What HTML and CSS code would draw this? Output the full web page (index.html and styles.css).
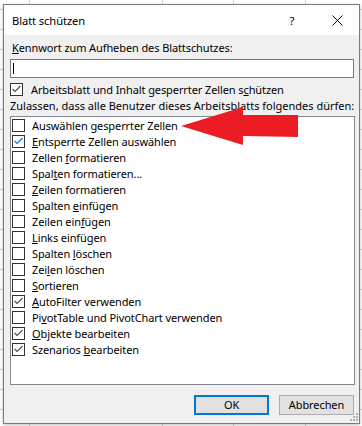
FILE: index.html
```html
<!DOCTYPE html>
<html lang="de">
<head>
<meta charset="utf-8">
<title>Blatt schützen</title>
<link rel="stylesheet" href="styles.css">
</head>
<body>
<div class="desk">
  <div class="dialog">
    <div class="titlebar">
      <span class="title">Blatt schützen</span>
      <span class="help">?</span>
      <span class="close"><svg width="11" height="11" viewBox="0 0 11 11"><path d="M0.5 0.5 L10.5 10.5 M10.5 0.5 L0.5 10.5" stroke="#000" stroke-width="1" fill="none"/></svg></span>
    </div>
    <div class="body">
      <div class="label"><u>K</u>ennwort zum Aufheben des Blattschutzes:</div>
      <div class="input"><span class="caret"></span></div>
      <div class="row main">
        <span class="cb"><svg class="tick" viewBox="0 0 11 11"><polyline points="1.5,5 4,7.5 9.5,2"/></svg></span>
        <span class="txt">Arbeitsblatt und Inhalt gesperrter Zellen s<u>c</u>hützen</span>
      </div>
      <div class="label2">Zulassen, dass alle Benutzer dieses Arbeitsblatts folgendes dürfen:</div>
      <div class="list">
        <div class="row"><span class="cb"></span><span class="txt">Auswählen <u>g</u>esperrter Zellen</span></div>
        <div class="row"><span class="cb"><svg class="tick blue" viewBox="0 0 11 11"><polyline points="1.5,5 4,7.5 9.5,2"/></svg></span><span class="txt"><u>E</u>ntsperrte Zellen auswählen</span></div>
        <div class="row"><span class="cb"></span><span class="txt">Zellen <u>f</u>ormatieren</span></div>
        <div class="row"><span class="cb"></span><span class="txt">Spal<u>t</u>en formatieren...</span></div>
        <div class="row"><span class="cb"></span><span class="txt"><u>Z</u>eilen formatieren</span></div>
        <div class="row"><span class="cb"></span><span class="txt">Spalten <u>e</u>infügen</span></div>
        <div class="row"><span class="cb"></span><span class="txt">Zeilen ein<u>f</u>ügen</span></div>
        <div class="row"><span class="cb"></span><span class="txt"><u>L</u>inks einfügen</span></div>
        <div class="row"><span class="cb"></span><span class="txt">Spalten <u>l</u>öschen</span></div>
        <div class="row"><span class="cb"></span><span class="txt">Zei<u>l</u>en löschen</span></div>
        <div class="row"><span class="cb"></span><span class="txt"><u>S</u>ortieren</span></div>
        <div class="row"><span class="cb"><svg class="tick" viewBox="0 0 11 11"><polyline points="1.5,5 4,7.5 9.5,2"/></svg></span><span class="txt"><u>A</u>utoFilter verwenden</span></div>
        <div class="row"><span class="cb"></span><span class="txt">Pi<u>v</u>otTable und PivotChart verwenden</span></div>
        <div class="row"><span class="cb"><svg class="tick" viewBox="0 0 11 11"><polyline points="1.5,5 4,7.5 9.5,2"/></svg></span><span class="txt"><u>O</u>bjekte bearbeiten</span></div>
        <div class="row"><span class="cb"><svg class="tick" viewBox="0 0 11 11"><polyline points="1.5,5 4,7.5 9.5,2"/></svg></span><span class="txt">Szenarios <u>b</u>earbeiten</span></div>
      </div>
      <div class="buttons">
        <button class="btn ok">OK</button>
        <button class="btn">Abbrechen</button>
      </div>
    </div>
    <svg class="grip" width="10" height="10" viewBox="0 0 10 10">
      <rect x="8" y="2" width="2" height="2" fill="#b0b0b0"/>
      <rect x="5" y="5" width="2" height="2" fill="#b0b0b0"/>
      <rect x="8" y="5" width="2" height="2" fill="#b0b0b0"/>
      <rect x="2" y="8" width="2" height="2" fill="#b0b0b0"/>
      <rect x="5" y="8" width="2" height="2" fill="#b0b0b0"/>
      <rect x="8" y="8" width="2" height="2" fill="#b0b0b0"/>
    </svg>
  </div>
  <svg class="arrow" width="362" height="426" viewBox="0 0 362 426">
    <polygon points="181,126 243,107 243,115 298,115 298,137 243,136 243,145" fill="#ed1c24"/>
  </svg>
</div>
</body>
</html>
```

FILE: styles.css
```css
html, body {
  margin: 0;
  padding: 0;
}
body {
  font-family: "Noto Sans", "Open Sans", sans-serif;
  font-size: 11px;
  letter-spacing: -0.1px;
  color: #000;
}
.desk {
  position: relative;
  width: 362px;
  height: 426px;
  overflow: hidden;
  box-sizing: border-box;
  padding: 4px 0 0 3px;
  background-color: #fff;
  background-image:
    linear-gradient(to right, transparent 29px, #d4d4d4 29px, #d4d4d4 30px, transparent 30px),
    linear-gradient(to right, transparent 162px, #d4d4d4 162px, #d4d4d4 163px, transparent 163px),
    linear-gradient(to right, transparent 233px, #d4d4d4 233px, #d4d4d4 234px, transparent 234px),
    linear-gradient(to right, transparent 305px, #d4d4d4 305px, #d4d4d4 306px, transparent 306px),
    repeating-linear-gradient(to bottom, transparent 0, transparent 9px, #d4d4d4 9px, #d4d4d4 10px, transparent 10px, transparent 20px);
}
.dialog {
  position: relative;
  width: 357px;
  height: 420px;
  box-sizing: border-box;
  border: 1px solid #7b7b7b;
  background: #f0f0f0;
  box-shadow: 0 1px 3px rgba(0,0,0,0.25);
  display: flex;
  flex-direction: column;
}
.titlebar {
  height: 30px;
  background: #fff;
  display: flex;
  align-items: center;
  flex: none;
}
.title {
  flex: 1;
  padding-left: 8px;
  font-size: 11.2px;
}
.help {
  width: 46px;
  text-align: center;
  font-size: 11.5px;
}
.close {
  width: 44px;
  display: flex;
  justify-content: center;
  align-items: center;
}
.close svg {
  display: block;
}
.body {
  flex: 1;
  padding: 5px 4px 0 6px;
  display: flex;
  flex-direction: column;
  position: relative;
}
.label {
  line-height: 16px;
  padding-left: 2px;
}
.input {
  width: 344px;
  height: 19px;
  box-sizing: border-box;
  margin-top: 3px;
  border: 1px solid #7a7a7a;
  background: #fff;
}
.caret {
  display: block;
  width: 1px;
  height: 11px;
  margin: 3px 0 0 2px;
  background: #000;
}
.row {
  display: flex;
  align-items: flex-start;
  height: 16px;
  line-height: 16px;
}
.row.main {
  margin-top: 4px;
}
.cb {
  flex: none;
  width: 13px;
  height: 13px;
  box-sizing: border-box;
  border: 1px solid #333;
  background: #fff;
  margin-top: 1px;
  position: relative;
}
.tick {
  display: block;
  width: 11px;
  height: 11px;
  fill: none;
  stroke: #4a4a4a;
  stroke-width: 1.1;
}
.tick.blue {
  stroke: #0078d7;
}
.txt {
  margin-left: 8px;
  white-space: nowrap;
}
.label2 {
  line-height: 16px;
  white-space: nowrap;
  letter-spacing: 0;
}
.list {
  margin-top: 2px;
  height: 269px;
  box-sizing: border-box;
  border: 1px solid #828790;
  background: #fff;
  padding-top: 1px;
}
.list .row {
  padding-left: 1px;
}
.list .txt {
  margin-left: 7px;
}
.buttons {
  display: flex;
  justify-content: flex-end;
  gap: 10px;
  margin-top: 10px;
  padding-right: 1px;
}
.btn {
  width: 75px;
  height: 20px;
  box-sizing: border-box;
  border: 1px solid #adadad;
  background: #e1e1e1;
  font-family: "Noto Sans", "Open Sans", sans-serif;
  font-size: 11px;
  letter-spacing: -0.1px;
  color: #000;
  padding: 0;
  margin: 0;
  line-height: 16px;
}
.btn.ok {
  border: 2px solid #0078d7;
}
.grip {
  position: absolute;
  right: 1px;
  bottom: 2px;
}
.arrow {
  position: absolute;
  left: 0;
  top: 0;
  pointer-events: none;
}
```
